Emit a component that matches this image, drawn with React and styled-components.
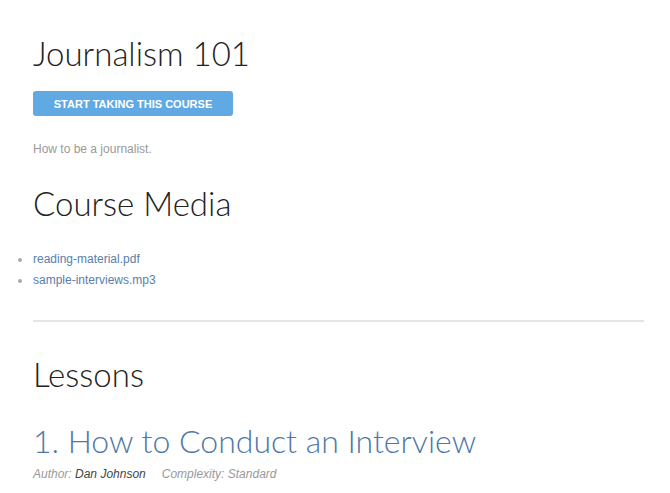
import React from 'react';
import styled, { createGlobalStyle } from 'styled-components';

const GlobalStyle = createGlobalStyle`
    body {
        margin: 0;
        background: #fff;
        font-family: 'Liberation Sans', Arial, sans-serif;
    }
`

const Page = styled.main`
    padding: 31px 26px 0 33px;
`

const Title = styled.h1`
    font-family: 'Lato', 'Open Sans', sans-serif;
    font-weight: 300;
    font-size: 33px;
    line-height: 44px;
    color: #222;
    margin: 0 0 16px;
`

const SectionTitle = styled.h2`
    font-family: 'Lato', 'Open Sans', sans-serif;
    font-weight: 300;
    font-size: 33px;
    line-height: 44px;
    color: #222;
    margin: ${props => props.top || 0}px 0 ${props => props.bottom || 0}px;
`

const Button = styled.button`
    display: block;
    width: 200px;
    height: 25px;
    border: none;
    border-radius: 3px;
    background: #61a9e3;
    color: #fff;
    font-family: 'Liberation Sans', Arial, sans-serif;
    font-weight: bold;
    font-size: 11px;
    text-transform: uppercase;
    padding: 0;
`

const Description = styled.p`
    font-size: 12px;
    color: #999;
    margin: 26px 0 0;
`

const MediaList = styled.ul`
    margin: 24px 0 0;
    padding: 0;
    list-style: none;

    li {
        position: relative;
        font-size: 12px;
        line-height: 21px;

        &::before {
            content: '';
            position: absolute;
            left: -15px;
            top: 9px;
            width: 4px;
            height: 4px;
            border-radius: 50%;
            background: #aaa;
        }
    }

    a {
        color: #5a7eaa;
        text-decoration: none;
    }
`

const Divider = styled.hr`
    border: none;
    height: 2px;
    background: #e5e5e5;
    margin: 29px 0 0;
`

const LessonTitle = styled.a`
    display: block;
    font-family: 'Lato', 'Open Sans', sans-serif;
    font-weight: 300;
    font-size: 32px;
    line-height: 40px;
    color: #4f78a8;
    text-decoration: none;
    margin-top: 25px;
`

const Meta = styled.div`
    display: flex;
    gap: 16px;
    font-size: 12px;
    font-style: italic;
    color: #999;
    margin-top: 6px;

    b {
        font-weight: normal;
        color: #444;
    }
`

export default function App() {
    return (<Page>
        <GlobalStyle />
        <Title>Journalism 101</Title>
        <Button>Start taking this course</Button>
        <Description>How to be a journalist.</Description>

        <SectionTitle top={25}>Course Media</SectionTitle>
        <MediaList>
            <li><a href="#">reading-material.pdf</a></li>
            <li><a href="#">sample-interviews.mp3</a></li>
        </MediaList>

        <Divider />

        <SectionTitle top={30}>Lessons</SectionTitle>
        <LessonTitle href="#">1. How to Conduct an Interview</LessonTitle>
        <Meta>
            <span>Author: <b>Dan Johnson</b></span>
            <span>Complexity: Standard</span>
        </Meta>
    </Page>);
}
